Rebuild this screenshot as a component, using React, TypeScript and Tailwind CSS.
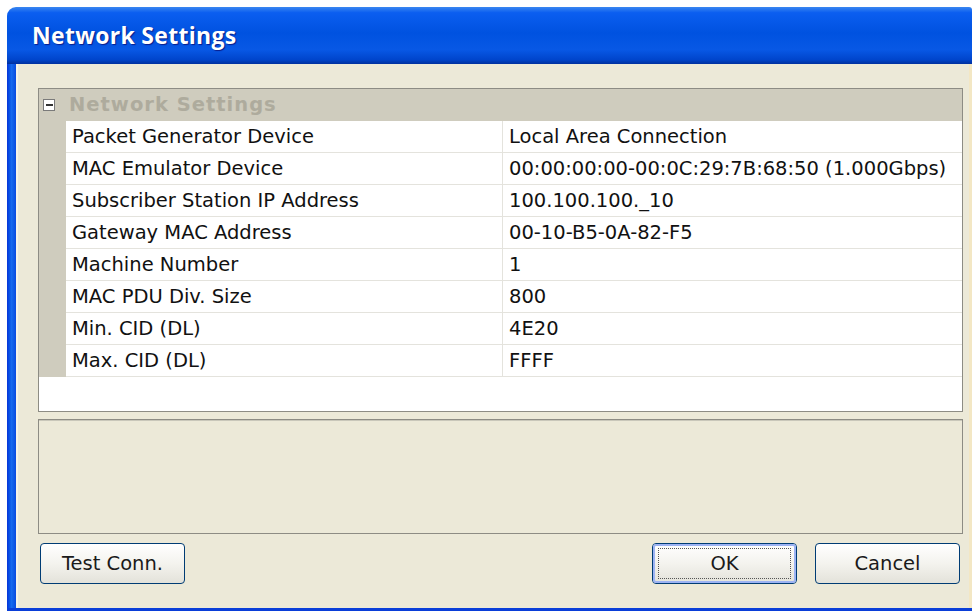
import React from 'react'

const rows = [
  { name: 'Packet Generator Device', value: 'Local Area Connection' },
  { name: 'MAC Emulator Device', value: '00:00:00:00-00:0C:29:7B:68:50 (1.000Gbps)' },
  { name: 'Subscriber Station IP Address', value: '100.100.100._10' },
  { name: 'Gateway MAC Address', value: '00-10-B5-0A-82-F5' },
  { name: 'Machine Number', value: '1' },
  { name: 'MAC PDU Div. Size', value: '800' },
  { name: 'Min. CID (DL)', value: '4E20' },
  { name: 'Max. CID (DL)', value: 'FFFF' },
]

function XpButton({ label, isDefault = false, className = '' }: { label: string; isDefault?: boolean; className?: string }) {
  return (
    <button
      className={`h-[41px] w-[145px] rounded-[4px] border border-[#003c74] bg-gradient-to-b from-white via-[#f4f3ee] to-[#e3e2da] text-[19.5px] text-[#1a1a1a] ${className}`}
    >
      <span
        className={`flex h-full w-full items-center justify-center rounded-[3px] ${
          isDefault ? 'border-2 border-[#9db3f3]' : ''
        }`}
      >
        <span
          className={`flex h-[calc(100%-4px)] w-[calc(100%-6px)] items-center justify-center ${
            isDefault ? 'border border-dotted border-[#555]' : ''
          }`}
        >
          {label}
        </span>
      </span>
    </button>
  )
}

export default function App() {
  return (
    <div className="h-[611px] w-[978px] overflow-hidden bg-white font-['DejaVu_Sans',sans-serif]">
      <div className="ml-[7px] mt-[7px] flex h-[604px] w-[965px] flex-col">
        {/* title bar */}
        <div className="flex h-[57px] items-center rounded-tl-[9px] rounded-tr-[3px] bg-[linear-gradient(to_bottom,#3a87f0_0%,#0b5ef0_10%,#0052e0_45%,#0858e5_75%,#0045cc_92%,#00309e_100%)] pl-[25px]">
          <span className="text-[23px] font-bold tracking-[0.3px] text-white [text-shadow:1px_1px_1px_#0a1c8a] font-['Open_Sans','DejaVu_Sans',sans-serif]">
            Network Settings
          </span>
        </div>

        <div className="flex flex-1">
          {/* left frame */}
          <div className="w-[9px] bg-gradient-to-r from-[#0831d9] via-[#166aee] to-[#0a4be0]" />

          {/* client area */}
          <div className="flex flex-1 flex-col border-l-[2px] border-l-[#f6f4e8] bg-[#ece9d8] pl-[20px] pr-[6px] pt-[24px]">
            <div className="flex h-[324px] flex-col border border-[#8d8c84] bg-white text-[19.5px] text-[#111]">
              {/* category row */}
              <div className="flex h-[32px] items-center bg-[#cfccbe]">
                <div className="ml-[4px] flex h-[12px] w-[12px] items-center justify-center border border-[#7a7a7a] bg-white">
                  <div className="h-[2px] w-[7px] bg-[#333]" />
                </div>
                <span className="ml-[14px] font-bold tracking-[1px] text-[#aeab9d]">Network Settings</span>
              </div>

              {rows.map((r) => (
                <div key={r.name} className="flex h-[32px]">
                  <div className="w-[27px] bg-[#cfccbe]" />
                  <div className="flex w-[436px] items-center border-b border-[#e4e3dd] pl-[6px]">{r.name}</div>
                  <div className="flex flex-1 items-center border-b border-l border-[#e4e3dd] pl-[6px]">{r.value}</div>
                </div>
              ))}
            </div>

            {/* description pane */}
            <div className="mt-[7px] h-[115px] border border-[#8d8c84] bg-[#ece9d8] shadow-[inset_0_1px_0_#c9c7ba]" />

            <div className="mt-[9px] flex">
              <XpButton label="Test Conn." className="ml-[2px]" />
              <div className="flex-1" />
              <XpButton label="OK" isDefault />
              <XpButton label="Cancel" className="ml-[18px] mr-[3px]" />
            </div>
          </div>

          {/* right frame */}
          <div className="w-[3px] bg-[#f3e7c4]" />
        </div>

        {/* bottom frame */}
        <div className="h-[3px] bg-[#0a3ed8]" />
      </div>
    </div>
  )
}
